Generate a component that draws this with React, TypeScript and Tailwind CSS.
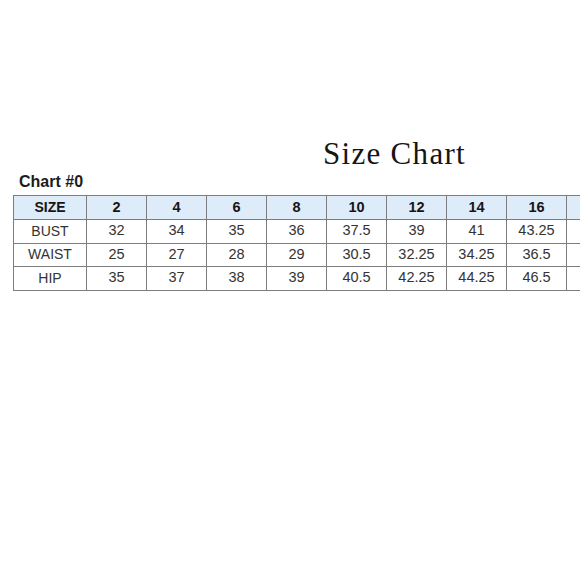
const SIZES = ['2', '4', '6', '8', '10', '12', '14', '16'];

const ROWS: { label: string; values: string[] }[] = [
  { label: 'BUST', values: ['32', '34', '35', '36', '37.5', '39', '41', '43.25'] },
  { label: 'WAIST', values: ['25', '27', '28', '29', '30.5', '32.25', '34.25', '36.5'] },
  { label: 'HIP', values: ['35', '37', '38', '39', '40.5', '42.25', '44.25', '46.5'] },
];

const cell = 'border border-[#7d7d7d] text-center p-0';

export default function App() {
  return (
    <div className="w-[580px] h-[580px] overflow-hidden bg-white" style={{ fontFamily: '"Liberation Sans", Arial, sans-serif' }}>
      <div className="pt-[138px]">
        <h1
          className="ml-[323px] text-[31px] leading-none tracking-[1.3px] text-[#151515] whitespace-nowrap"
          style={{ fontFamily: '"Liberation Serif", "Times New Roman", serif' }}
        >
          Size Chart
        </h1>

        <div className="ml-[19px] mt-[5px] text-[16px] leading-none font-bold text-[#1c1c1c]">Chart #0</div>

        {/* table runs past the right edge, last column is cut off */}
        <div className="ml-[13px] mt-[5px] w-[620px]">
          <table className="table-fixed border-collapse w-[613px]">
            <colgroup>
              <col className="w-[73px]" />
              {SIZES.map(s => (
                <col key={s} className="w-[60px]" />
              ))}
              <col className="w-[60px]" />
            </colgroup>
            <thead>
              <tr className="h-[24px] bg-[#deebf8]">
                <th className={`${cell} text-[14px] font-bold text-[#151515]`}>SIZE</th>
                {SIZES.map(s => (
                  <th key={s} className={`${cell} text-[14.5px] font-bold text-[#151515]`}>
                    {s}
                  </th>
                ))}
                <th className={cell}></th>
              </tr>
            </thead>
            <tbody>
              {ROWS.map(row => (
                <tr key={row.label} className="h-[23.5px]">
                  <td className={`${cell} text-[14px] text-[#333]`}>{row.label}</td>
                  {row.values.map((v, i) => (
                    <td key={i} className={`${cell} text-[14.5px] text-[#333]`}>
                      {v}
                    </td>
                  ))}
                  <td className={cell}></td>
                </tr>
              ))}
            </tbody>
          </table>
        </div>
      </div>
    </div>
  );
}
